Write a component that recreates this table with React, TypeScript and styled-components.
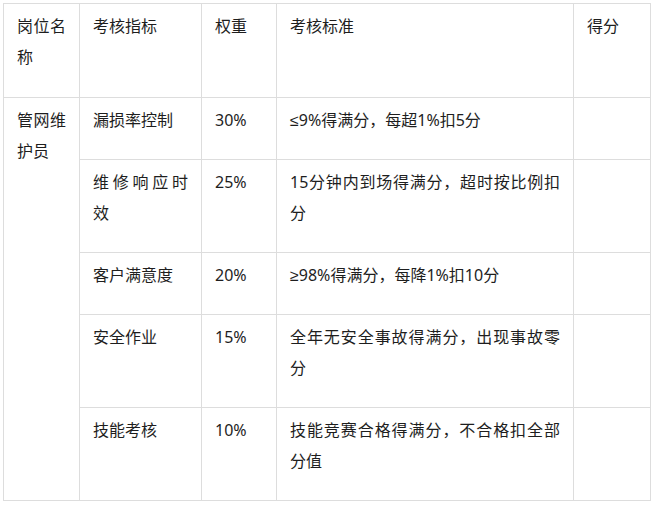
import React, {FC} from 'react';
import styled, {createGlobalStyle} from 'styled-components';

const BORDER_COLOR = '#dddddd';
const TEXT_COLOR = '#1e1e1e';

const GlobalStyle = createGlobalStyle`
  html, body {
    margin: 0;
    padding: 0;
    background: #ffffff;
  }
  body {
    font-family: "Noto Sans", "Liberation Sans", "Noto Sans CJK SC", sans-serif;
  }
`

interface IIndicator {
    name: string
    weight: string
    standard: string
}

const indicators: IIndicator[] = [
    {name: '漏损率控制', weight: '30%', standard: '≤9%得满分，每超1%扣5分'},
    {name: '维修响应时效', weight: '25%', standard: '15分钟内到场得满分，超时按比例扣分'},
    {name: '客户满意度', weight: '20%', standard: '≥98%得满分，每降1%扣10分'},
    {name: '安全作业', weight: '15%', standard: '全年无安全事故得满分，出现事故零分'},
    {name: '技能考核', weight: '10%', standard: '技能竞赛合格得满分，不合格扣全部分值'},
]

const App: FC = () => {
    return (
        <>
            <GlobalStyle/>
            <Page>
                <Table>
                    <colgroup>
                        <Col width={76}/>
                        <Col width={122}/>
                        <Col width={75}/>
                        <Col width={297}/>
                        <Col width={77}/>
                    </colgroup>
                    <tbody>
                    <HeaderRow>
                        <Cell>岗位名称</Cell>
                        <Cell>考核指标</Cell>
                        <Cell>权重</Cell>
                        <Cell>考核标准</Cell>
                        <Cell>得分</Cell>
                    </HeaderRow>
                    {
                        indicators.map((item, i) =>
                            <tr key={`row#${i}`}>
                                {i === 0 && <Cell rowSpan={indicators.length}>管网维护员</Cell>}
                                <Cell>{item.name}</Cell>
                                <Cell>{item.weight}</Cell>
                                <Cell>{item.standard}</Cell>
                                <Cell/>
                            </tr>
                        )
                    }
                    </tbody>
                </Table>
            </Page>
        </>
    );
};

export default App;

const Page = styled.div`
  padding: 3px;
`
const Table = styled.table`
  border-collapse: collapse;
  table-layout: fixed;
  width: 648px;
  border: 1px solid ${BORDER_COLOR};
`

interface IColProps {
    width: number
}
const Col = styled.col<IColProps>`
  width: ${props => props.width}px;
`
const HeaderRow = styled.tr`
  height: 94px;
`
const Cell = styled.td`
  border: 1px solid ${BORDER_COLOR};
  padding: 7px 13px 23px 13px;
  vertical-align: top;
  text-align: justify;
  font-size: 16px;
  line-height: 31px;
  color: ${TEXT_COLOR};
  word-break: break-all;
`
